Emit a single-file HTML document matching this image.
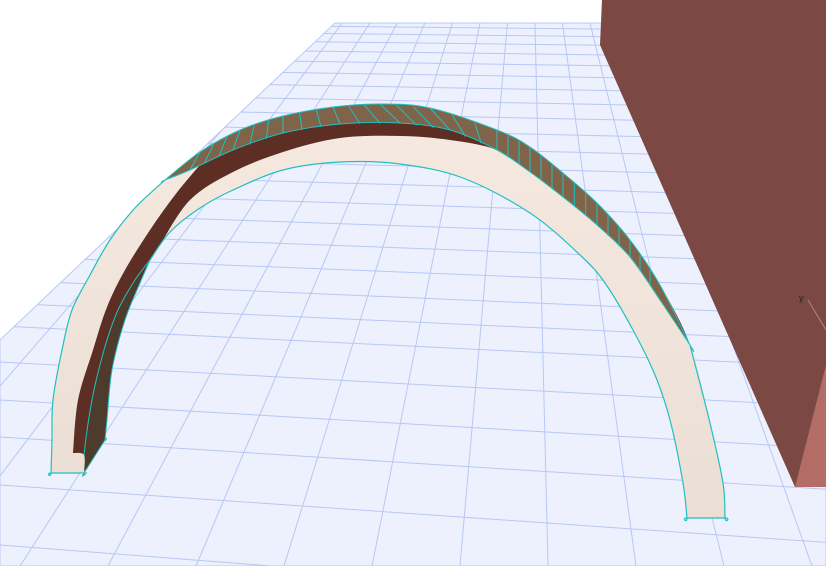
<!DOCTYPE html>
<html><head><meta charset="utf-8"><style>
html,body{margin:0;padding:0;background:#fff;width:826px;height:566px;overflow:hidden}
svg{display:block;position:absolute;left:0;top:0}
</style></head><body>
<svg id="s" width="826" height="566" viewBox="0 0 826 566" xmlns="http://www.w3.org/2000/svg">
<defs>
<clipPath id="pl"><polygon points="335,23 826,23 826,566 0,566 0,340"/></clipPath>
<linearGradient id="cr" x1="0" y1="0" x2="0" y2="1"><stop offset="0" stop-color="#f5e9df"/><stop offset="1" stop-color="#ebdfd5"/></linearGradient>
</defs>
<polygon points="335,23 826,23 826,566 0,566 0,340" fill="#edf1fd" stroke="#b9c9f6" stroke-width="1"/>
<g id="grid" clip-path="url(#pl)" stroke="#b7c7f6" stroke-width="1" fill="none"></g>
<polygon points="602,0 826,0 826,487 795,487 600,45" fill="#7b4843"/>
<polygon points="795,487 826,487 826,365" fill="#b46c66"/>
<line x1="808" y1="300" x2="826" y2="330" stroke="#a88" stroke-width="1"/>
<text x="799" y="301" font-family="Liberation Sans, sans-serif" font-size="9" fill="#222">y</text>
<polygon class="sm" fill="#5c2e24" points="51,473 51,473 52,440 53,400 62,350 72,310 90,275 110,240 135,208 165,180 200,152 240,130 283,116 333,107 380,104 430,108 497,130 530,147 563,173 597,203 630,240 660,285 690,345 710,423 723,483 725,518 725,518 687,518 687,518 683,483 670,420 655,375 633,330 605,283 580,255 530,213 463,178 400,164 340,162 283,170 233,190 200,208 170,232 150,260 140,283 125,320 112,370 107,420 105,440 105,440 84,473 84,473"/>
<polygon class="sm" fill="#4f3b2b" stroke="#20c0c0" stroke-width="1" points="84,473 84,473 84,455 92,400 104,350 118,310 135,280 150,260 150,260 140,283 125,320 112,370 107,420 105,440 105,440"/>
<polygon class="sm" fill="url(#cr)" points="51,473 51,473 52,440 53,400 62,350 72,310 90,275 110,240 135,208 165,180 200,152 215,150 215,150 200,165 175,195 150,230 125,270 107,307 93,350 78,400 73,453 73,453 84,455 84,473 84,473"/>
<polygon class="sm" fill="url(#cr)" points="160,245 160,245 190,200 233,172 283,152 340,138 400,136 450,140 497,150 530,172 563,197 597,225 630,257 660,300 690,345 710,423 723,483 725,518 725,518 687,518 687,518 683,483 670,420 655,375 633,330 605,283 580,255 530,213 463,178 400,164 340,162 283,170 233,190 200,208 170,232"/>
<polygon class="sm" fill="#80644a" stroke="#20c0c0" stroke-width="1" points="165,180 165,180 200,152 240,130 283,116 333,107 380,104 430,108 497,130 530,147 563,173 597,203 630,240 660,285 690,345 690,345 660,300 630,257 597,225 563,197 530,172 497,150 450,130 400,123 340,124 283,133 233,150 190,170"/>
<g id="hatch" stroke="#20c0c0" stroke-width="1"></g>
<polyline class="sm" fill="none" stroke="#20c0c0" stroke-width="1.2" points="84,473 84,473 51,473 51,473 52,440 53,400 62,350 72,310 90,275 110,240 135,208 165,180"/>
<polyline class="sm" fill="none" stroke="#20c0c0" stroke-width="1.2" points="690,345 710,423 723,483 725,518 725,518 687,518 687,518 683,483 670,420 655,375 633,330 605,283 580,255 530,213 463,178 400,164 340,162 283,170 233,190 200,208 170,232 150,260"/>
</svg>
<script>
var ns="http://www.w3.org/2000/svg",g=document.getElementById('grid');
function L(p,a,b,c,d){var l=document.createElementNS(ns,'line');l.setAttribute('x1',a);l.setAttribute('y1',b);l.setAttribute('x2',c);l.setAttribute('y2',d);p.appendChild(l);}
var ys=[23,30,38,47,57,68,80,93,107,122,138,155,173,192,212,233,256,280,303,326,362,400,437,485,545];
ys.forEach(function(y){var k=(y+55)/7770;L(g,0,y,826,y+k*826);});
for(var k=-8;k<14;k++){L(g,529,-224,20+88*k,566);}
var O=[[200,152],[240,130],[283,116],[333,107],[380,104],[430,108],[497,130],[530,147],[563,173],[597,203],[630,240],[660,285]];
var I=[[190,170],[233,150],[283,133],[340,124],[400,123],[450,130],[497,150],[530,172],[563,197],[597,225],[630,257],[660,300]];
var h=document.getElementById('hatch');
for(var i=0;i<O.length-1;i++){for(var t=0;t<3;t++){var f=t/3;
L(h,O[i][0]+(O[i+1][0]-O[i][0])*f,O[i][1]+(O[i+1][1]-O[i][1])*f,I[i][0]+(I[i+1][0]-I[i][0])*f,I[i][1]+(I[i+1][1]-I[i][1])*f);}}
// smooth polygons
var els=document.querySelectorAll('.sm');
els.forEach(function(el){
 var closed=el.tagName.toLowerCase()==='polygon';
 var p=el.getAttribute('points').trim().split(/\s+/).map(function(s){return s.split(',').map(Number);});
 var n=p.length,d='M'+p[0][0]+','+p[0][1];
 function P(i){if(closed)return p[(i+n)%n];return p[Math.max(0,Math.min(n-1,i))];}
 var segs=closed?n:n-1;
 for(var i=0;i<segs;i++){
  var p0=P(i-1),p1=P(i),p2=P(i+1),p3=P(i+2);
  var c1=[p1[0]+(p2[0]-p0[0])/6,p1[1]+(p2[1]-p0[1])/6];
  var c2=[p2[0]-(p3[0]-p1[0])/6,p2[1]-(p3[1]-p1[1])/6];
  d+=' C'+c1[0].toFixed(1)+','+c1[1].toFixed(1)+' '+c2[0].toFixed(1)+','+c2[1].toFixed(1)+' '+p2[0]+','+p2[1];
 }
 if(closed)d+='Z';
 var path=document.createElementNS(ns,'path');
 path.setAttribute('d',d);
 ['fill','stroke','stroke-width'].forEach(function(a){if(el.getAttribute(a))path.setAttribute(a,el.getAttribute(a));});
 el.parentNode.replaceChild(path,el);
});
</script>
</body></html>
